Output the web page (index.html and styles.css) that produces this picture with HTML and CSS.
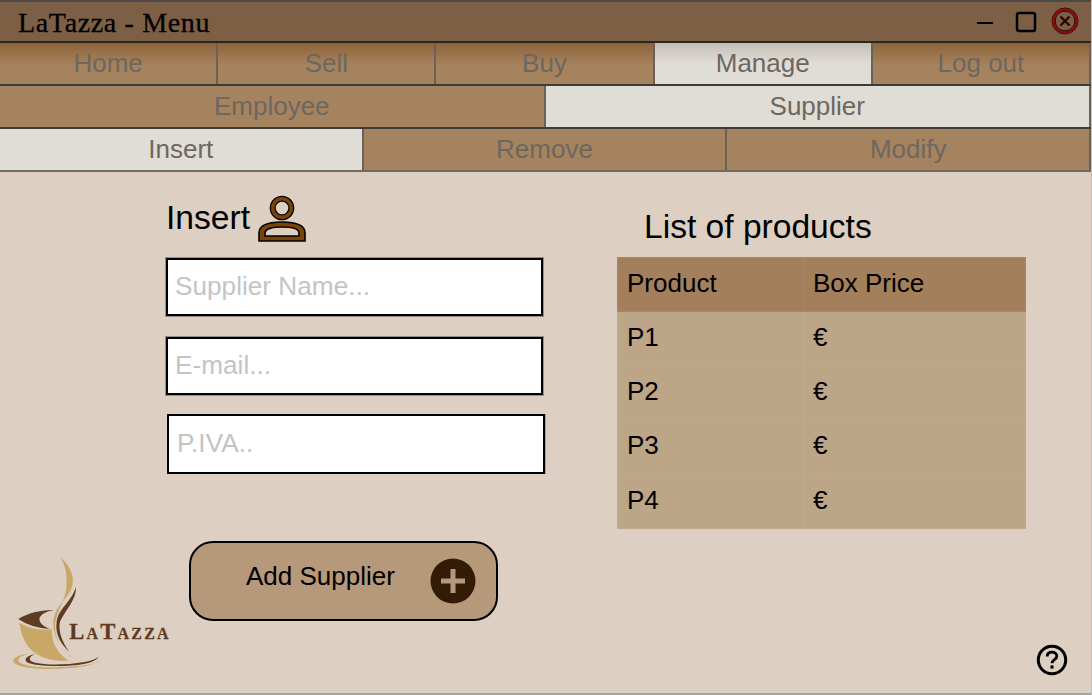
FILE: index.html
```html
<!doctype html>
<html>
  <head>
    <meta charset="utf-8">
    <title>LaTazza - Menu</title>
    <link rel="stylesheet" href="styles.css">
  </head>
  <body>
    <header class="titlebar">
      <span class="title">LaTazza - Menu</span>
      <div class="winbtns">
        <svg class="win-min" width="16" height="4" viewBox="0 0 16 4"><path d="M0 2h16" stroke="#000" stroke-width="2"/></svg>
        <svg width="22" height="22" viewBox="0 0 22 22"><rect x="2" y="2" width="18" height="18" rx="2" fill="none" stroke="#000" stroke-width="2.5"/></svg>
        <svg class="win-close" width="28" height="28" viewBox="0 0 28 28">
          <circle cx="14" cy="14" r="13" fill="none" stroke="#2a0d08" stroke-width="1"/>
          <circle cx="14" cy="14" r="11.4" fill="none" stroke="#8c0a0a" stroke-width="2.4"/>
          <circle cx="14" cy="14" r="9.8" fill="none" stroke="#2a0d08" stroke-width="1"/>
          <path d="M9.5 9.5l9 9M18.5 9.5l-9 9" stroke="#2c0505" stroke-width="2.4"/>
        </svg>
      </div>
    </header>

    <nav class="tabs tabs-main">
      <a class="tab">Home</a>
      <a class="tab">Sell</a>
      <a class="tab">Buy</a>
      <a class="tab active">Manage</a>
      <a class="tab">Log out</a>
    </nav>
    <nav class="tabs">
      <a class="tab">Employee</a>
      <a class="tab active">Supplier</a>
    </nav>
    <nav class="tabs tabs-last">
      <a class="tab active">Insert</a>
      <a class="tab">Remove</a>
      <a class="tab">Modify</a>
    </nav>

    <main class="content">
      <div class="columns">
        <form class="supplier-form">
          <div class="form-head">
            <h2>Insert</h2>
            <svg class="user-icon" width="50" height="48" viewBox="0 0 50 48">
              <circle cx="25" cy="13" r="9.3" fill="none" stroke="#000" stroke-width="6"/>
              <circle cx="25" cy="13" r="9.3" fill="none" stroke="#7a4308" stroke-width="3.4"/>
              <path fill-rule="evenodd" d="M2 46V38C2 31 10 27 25 27S48 31 48 38V46ZM8 41H42V38C42 34 35 32 25 32S8 34 8 38Z" fill="#7a4308" stroke="#000" stroke-width="1.6"/>
            </svg>
          </div>
          <input class="field" type="text" placeholder="Supplier Name...">
          <input class="field" type="text" placeholder="E-mail...">
          <input class="field field-shift" type="text" placeholder="P.IVA..">
        </form>

        <section class="products">
          <h2>List of products</h2>
          <table>
            <thead>
              <tr><th>Product</th><th>Box Price</th></tr>
            </thead>
            <tbody>
              <tr><td>P1</td><td>€</td></tr>
              <tr><td>P2</td><td>€</td></tr>
              <tr><td>P3</td><td>€</td></tr>
              <tr><td>P4</td><td>€</td></tr>
            </tbody>
          </table>
        </section>
      </div>

      <div class="bottom">
        <svg class="logo" width="180" height="153" viewBox="0 0 540 459">
          <path fill="#c8a767" d="M180 50C215 80 228 120 212 150C195 185 160 205 160 250C160 300 190 330 225 358C190 335 165 300 165 262C165 215 195 190 199 140C202 105 198 80 180 50Z"/>
          <path fill="#5f3b22" d="M228 140C230 180 192 215 180 245C174 270 185 305 208 335C180 310 165 280 170 245C175 205 215 185 228 140Z"/>
          <path fill="#c8a767" d="M58 248C90 268 125 270 155 268C155 300 165 335 205 362C150 365 110 350 85 320C70 300 62 275 58 248Z"/>
          <path fill="#5f3b22" d="M55 237C85 218 125 210 162 210C135 215 120 225 118 237C118 250 135 262 150 267C115 265 80 255 55 237Z"/>
          <path fill="#c8a767" d="M90 340C55 345 35 355 40 365C50 385 130 390 200 385C255 382 300 370 302 358C295 375 230 380 170 382C110 385 60 375 55 362C55 352 70 345 90 340Z"/>
          <path fill="#5f3b22" d="M105 343C80 347 72 358 80 366C100 380 200 382 250 372C275 367 292 360 295 350C285 362 240 370 190 373C140 375 95 370 90 360C88 352 95 347 105 343Z"/>
          <text class="logo-text" x="208" y="296">LaTazza</text>
        </svg>

        <button class="add-btn" type="button">
          <span class="add-label">Add Supplier</span>
          <svg width="46" height="46" viewBox="0 0 46 46">
            <circle cx="23" cy="23" r="22.5" fill="#331c06"/>
            <path d="M23 11v24M11 23h24" stroke="#b6987a" stroke-width="5"/>
          </svg>
        </button>

        <svg class="help" width="32" height="32" viewBox="0 0 32 32">
          <circle cx="16" cy="16" r="13.7" fill="none" stroke="#000" stroke-width="3"/>
          <path d="M11.2 12.6C11.2 9.8 13.2 8.2 16 8.2S20.8 9.8 20.8 12.2C20.8 15.6 16 15.6 16 19.2" fill="none" stroke="#000" stroke-width="2.8"/>
          <path d="M16 21.4v3.2" stroke="#000" stroke-width="3"/>
        </svg>
      </div>
    </main>
  </body>
</html>
```

FILE: styles.css
```css
html, body { margin: 0; padding: 0; }
body {
  box-sizing: border-box;
  width: 1092px;
  height: 695px;
  overflow: hidden;
  background-color: #ddd0c3;
  border-right: 1px solid #c2bfbb;
  font-family: "Liberation Sans", Arial, sans-serif;
  color: #000;
}

.titlebar {
  box-sizing: border-box;
  height: 43px;
  display: flex;
  align-items: center;
  justify-content: space-between;
  padding-left: 18px;
  background-color: #7d5f45;
  border-top: 2px solid #4b4a48;
  border-bottom: 2px solid #2b2622;
}
.title {
  padding-top: 3px;
  font-family: "Liberation Serif", serif;
  font-size: 28px;
  letter-spacing: .65px;
  -webkit-text-stroke: .3px #000;
}
.winbtns { display: flex; align-items: center; gap: 14px; padding-right: 12px; }
.win-min { margin: 2px 8px 0 0; }
.win-close { margin-top: -2px; }

.tabs {
  box-sizing: border-box;
  height: 43px;
  display: flex;
  border-bottom: 2px solid #3f3b37;
}
.tab {
  box-sizing: border-box;
  flex: 1;
  display: flex;
  align-items: center;
  justify-content: center;
  font-size: 26px;
  color: #6d675f;
  background-color: #a5835f;
  border-right: 2px solid #68625b;
}
.tab.active { background-color: #e0dcd6; }
.tabs-main .tab { background-image: linear-gradient(#8f653a, #a5835f 55%); }
.tabs-main .tab.active { background-image: linear-gradient(#c4beb6, #e0dcd6 50%); }
.tabs-last { border-bottom-color: #6f6a64; }

.content {
  box-sizing: border-box;
  height: 523px;
  display: flex;
  flex-direction: column;
  border-bottom: 2px solid #a8a5a1;
}
.columns { height: 368px; display: flex; }

h2 { margin: 0; font-weight: normal; font-size: 33.6px; }

.supplier-form {
  width: 380px;
  margin-left: 166px;
  display: flex;
  flex-direction: column;
  align-items: flex-start;
  gap: 21px;
}
.form-head {
  box-sizing: border-box;
  height: 65px;
  padding-top: 27px;
  display: flex;
  align-items: center;
  gap: 7px;
}
.user-icon { margin-top: 2px; }
.field {
  box-sizing: border-box;
  width: 377px;
  height: 58px;
  padding: 0 7px 2px;
  border: 2px solid #000;
  box-shadow: 0 0 0 1px rgba(60, 60, 60, .45);
  background-color: #fff;
  font-family: inherit;
  font-size: 26.2px;
  outline: none;
}
.field::placeholder { color: #c4c4c4; opacity: 1; }
.field-shift {
  width: 378px;
  height: 60px;
  margin: -2px 0 0 1px;
  padding-left: 8px;
  box-shadow: 1px 0 0 #a89f95;
}

.products { width: 409px; margin-left: 71px; }
.products h2 { height: 85px; box-sizing: border-box; padding: 36px 0 0 27px; }
table { width: 100%; border-collapse: collapse; table-layout: fixed; font-size: 26px; }
th, td {
  height: 54px;
  padding: 0 9px 2px;
  text-align: left;
  font-weight: normal;
  box-sizing: border-box;
  border: 1px solid #c0a98d;
}
th:first-child { width: 186px; }
th { background-color: #a37f5b; border-color: #a98662; }
td { background-color: #bda588; }
tbody tr:last-child td { height: 55px; }

.bottom { flex: 1; display: flex; align-items: flex-start; }
.logo { flex: none; }
.logo-text {
  font-family: "Liberation Serif", serif;
  font-size: 68px;
  font-weight: bold;
  font-variant: small-caps;
  letter-spacing: 6.5px;
  fill: #5f3b22;
  stroke: #5f3b22;
  stroke-width: .8px;
}
.add-btn {
  box-sizing: border-box;
  width: 309px;
  height: 80px;
  margin: 1px 0 0 9px;
  padding: 0 20px 0 55px;
  display: flex;
  align-items: center;
  justify-content: space-between;
  background-color: #b6987a;
  border: 2px solid #000;
  border-radius: 24px;
  font-family: inherit;
  font-size: 26px;
  color: #000;
}
.add-label { margin-top: -9px; }
.help { margin: 104px 23px 0 auto; }
```
